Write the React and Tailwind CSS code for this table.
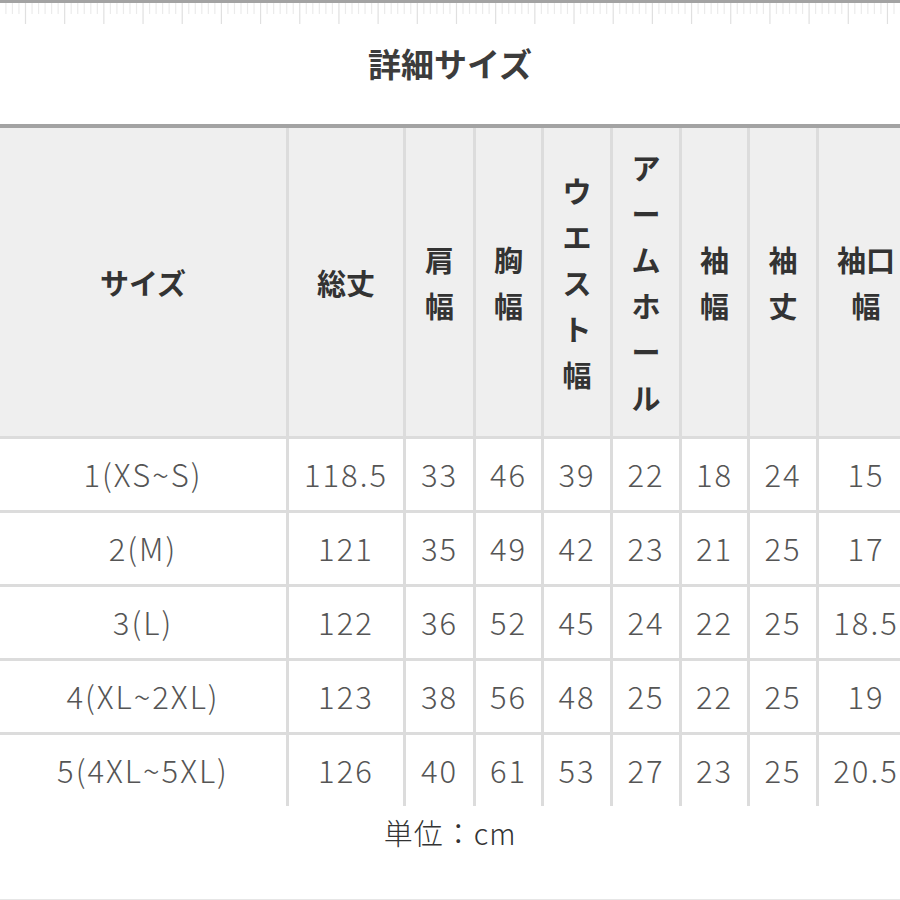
import React from 'react';

// --- SIZE TABLE DATA ---
const columns = [
  { w: 'w-[286px]', lines: ['サイズ'] },
  { w: 'w-[117px]', lines: ['総丈'] },
  { w: 'w-[70px]', lines: ['肩', '幅'] },
  { w: 'w-[68px]', lines: ['胸', '幅'] },
  { w: 'w-[69px]', lines: ['ウ', 'エ', 'ス', 'ト', '幅'] },
  { w: 'w-[69px]', lines: ['ア', 'ー', 'ム', 'ホ', 'ー', 'ル'] },
  { w: 'w-[68px]', lines: ['袖', '幅'] },
  { w: 'w-[69px]', lines: ['袖', '丈'] },
  { w: 'w-[97px]', lines: ['袖口', '幅'] },
];

const rows = [
  ['1(XS~S)', '118.5', '33', '46', '39', '22', '18', '24', '15'],
  ['2(M)', '121', '35', '49', '42', '23', '21', '25', '17'],
  ['3(L)', '122', '36', '52', '45', '24', '22', '25', '18.5'],
  ['4(XL~2XL)', '123', '38', '56', '48', '25', '22', '25', '19'],
  ['5(4XL~5XL)', '126', '40', '61', '53', '27', '23', '25', '20.5'],
];

const Ruler = () => {
  const ticks = [];
  for (let i = -4; i < 140; i++) {
    const x = 25.5 + i * 6.53;
    const long = i % 6 === 0;
    ticks.push(
      <line key={i} x1={x} y1="0" x2={x} y2={long ? 21 : 11} stroke={long ? '#e0e0e0' : '#ebebeb'} strokeWidth="1.2" />
    );
  }
  return (
    <svg width="900" height="22" className="block">
      {ticks}
    </svg>
  );
};

export default function App() {
  return (
    <div className="w-[900px] h-[900px] overflow-hidden bg-white relative" style={{ fontFamily: '"Noto Sans CJK JP", "Noto Sans", sans-serif' }}>
      <div className="h-[3px] bg-[#a3a3a3]"></div>
      <Ruler />

      {/* title */}
      <div className="h-[99px] pt-[18px]">
        <h1 className="text-center text-[33px] leading-[40px] font-bold text-[#3c3c3c]">詳細サイズ</h1>
      </div>

      <div className="h-[4px] bg-[#a3a3a3]"></div>

      {/* table */}
      <div className="w-[913px]">
        <div className="flex bg-[#efefef] border-b-[3px] border-[#dcdcdc]">
          {columns.map((col, i) => (
            <div
              key={i}
              className={`${col.w} shrink-0 h-[308px] flex flex-col items-center justify-center text-[29px] leading-[46px] font-bold text-[#333] ${i > 0 ? 'border-l-[3px] border-[#dcdcdc]' : ''}`}
            >
              {col.lines.map((l, j) => (
                <span key={j}>{l}</span>
              ))}
            </div>
          ))}
        </div>

        {rows.map((row, r) => (
          <div key={r} className={`flex ${r < rows.length - 1 ? 'border-b-[3px] border-[#dcdcdc]' : ''}`}>
            {row.map((cell, i) => (
              <div
                key={i}
                className={`${columns[i].w} shrink-0 h-[71px] flex items-center justify-center text-[31px] tracking-[2px] font-light text-[#555] whitespace-nowrap ${i > 0 ? 'border-l-[3px] border-[#dcdcdc]' : ''}`}
              >
                {cell}
              </div>
            ))}
          </div>
        ))}
      </div>

      {/* unit */}
      <p className="text-center text-[29px] leading-[40px] mt-[6px] font-light text-[#333] tracking-[1px]">単位：cm</p>

      <div className="absolute left-0 right-0 bottom-0 h-px bg-[#e6e6e6]"></div>
    </div>
  );
}
